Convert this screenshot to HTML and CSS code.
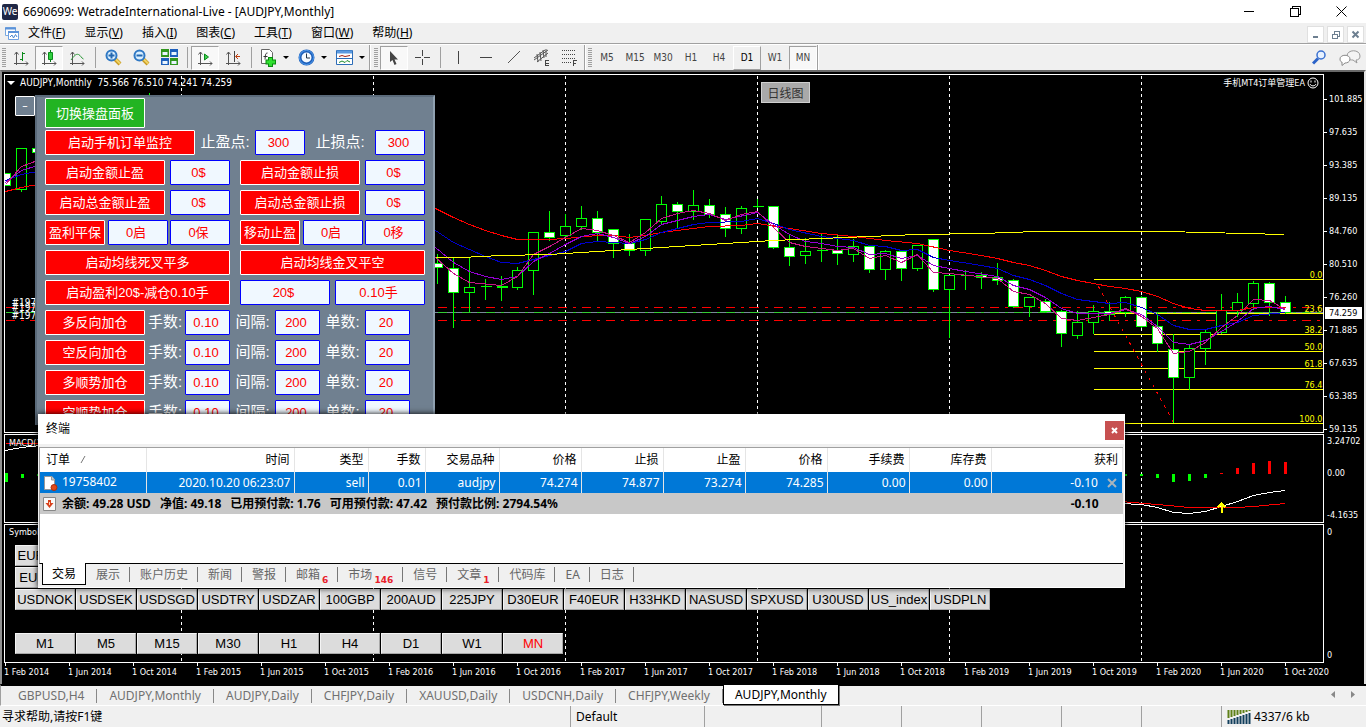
FILE: index.html
```html
<!DOCTYPE html>
<html lang="zh-CN">
<head>
<meta charset="utf-8">
<title>6690699: WetradeInternational-Live - [AUDJPY,Monthly]</title>
<link rel="stylesheet" href="styles.css">
</head>
<body>
<div class="app">
<header class="titlebar">
  <span class="logo">We</span>
  <h1 class="title">6690699: WetradeInternational-Live - [AUDJPY,Monthly]</h1>
  <div class="winbtns">
    <button aria-label="最小化"><svg width="11" height="11"><path d="M0 5.5H10" class="k"/></svg></button>
    <button aria-label="还原"><svg width="11" height="11"><path d="M.5 2.5H8.5V10.500H.5ZM2.500 2.500V.5H10.500V8.500H8.500" class="k"/></svg></button>
    <button aria-label="关闭"><svg width="11" height="11"><path d="M.5 .5L10.500 10.500M10.500 .5L.5 10.500" class="k smooth"/></svg></button>
  </div>
</header>
<nav class="menubar">
  <svg width="16" height="15" class="mdi"><path d="M1.500 1.500H11.500V9.500H1.500Z" fill="#fff" stroke="#78a8e0"/><path d="M1 2.500H12" stroke="#5b92d8" stroke-width="2"/><path d="M4.500 5.500H14.500V13.500H4.500Z" fill="#fff" stroke="#6fa0e0"/><path d="M4 6H15" stroke="#5b92d8" stroke-width="2"/><path d="M6 11L8 9L9.500 12L11.500 8.500L13 11" fill="none" stroke="#4a86d0"/></svg>
  <button>文件(<u>F</u>)</button><button>显示(<u>V</u>)</button><button>插入(<u>I</u>)</button><button>图表(<u>C</u>)</button><button>工具(<u>T</u>)</button><button>窗口(<u>W</u>)</button><button>帮助(<u>H</u>)</button>
  <div class="mdibtns">
    <button aria-label="最小化图表"><svg width="9" height="9"><path d="M2 7H7" class="m"/></svg></button>
    <button aria-label="还原图表"><svg width="9" height="9"><path d="M1 4.500H6V8.500H1ZM3.500 4V1.500H8V6H6" class="m thin"/><path d="M1 4H6M3 1H8" class="m thin"/></svg></button>
    <button aria-label="关闭图表"><svg width="9" height="9"><path d="M1.500 1.500L7.500 7.500M7.500 1.500L1.500 7.500" class="m smooth"/></svg></button>
  </div>
</nav>
<div class="toolbar">
  <i class="grip"></i>
  <button class="tb" aria-label="柱状图"><svg width="16" height="16"><path d="M3.500 2V15M1 13.500H15M1.500 4.500L3.500 2L5.500 4.500M13 11.500L15 13.500L13 15.500" class="ax"/><path d="M9.500 2V11M9.500 3.500H12M7 9.500H9.500" stroke="#0a8a1a" fill="none" stroke-width="1"/></svg></button>
  <button class="tb on" aria-label="蜡烛图"><svg width="16" height="16"><path d="M3.500 2V15M1 13.500H15M1.500 4.500L3.500 2L5.500 4.500M13 11.500L15 13.500L13 15.500" class="ax"/><path d="M9.500 0V12" stroke="#0a7a1a"/><path d="M7.500 2.500H11.500V9.500H7.500Z" fill="#30d040" stroke="#0a8a1a"/></svg></button>
  <button class="tb" aria-label="折线图"><svg width="16" height="16"><path d="M3.500 2V15M1 13.500H15M1.500 4.500L3.500 2L5.500 4.500M13 11.500L15 13.500L13 15.500" class="ax"/><path d="M2 10C5 6 7 3.500 9.500 4.500S12 8 14.500 9" stroke="#2f9a3a" fill="none"/></svg></button>
  <i class="sep"></i>
  <button class="tb" aria-label="放大"><svg width="17" height="17"><path d="M10 10L15 15" stroke="#c89a20" stroke-width="4"/><path d="M10 9.500L15 14.500" stroke="#f0d468" stroke-width="2"/><circle cx="6.500" cy="6.500" r="5" fill="#d9efff" stroke="#2f78c4" stroke-width="2"/><path d="M3.500 6.500H9.500M6.500 3.500V9.500" stroke="#2468b0" stroke-width="2"/></svg></button>
  <button class="tb" aria-label="缩小"><svg width="17" height="17"><path d="M10 10L15 15" stroke="#c89a20" stroke-width="4"/><path d="M10 9.500L15 14.500" stroke="#f0d468" stroke-width="2"/><circle cx="6.500" cy="6.500" r="5" fill="#d9efff" stroke="#2f78c4" stroke-width="2"/><path d="M3.500 6.500H9.500" stroke="#2468b0" stroke-width="2"/></svg></button>
  <button class="tb" aria-label="平铺窗口"><svg width="17" height="17"><path d="M0 0H8V8H0ZM9 9H17V16H9Z" fill="#30961e"/><path d="M9 0H17V8H9ZM0 9H8V16H0Z" fill="#1d5fbc"/><path d="M1.500 3H6.500V6H1.500ZM10.500 3H15.500V6H10.500ZM1.500 12H6.500V15H1.500ZM10.500 12H15.500V15H10.500Z" fill="#e8f4ff"/></svg></button>
  <i class="sep"></i>
  <button class="tb on" aria-label="自动滚动"><svg width="16" height="16"><path d="M3.500 2V15M1 13.500H15M1.500 4.500L3.500 2L5.500 4.500M13 11.500L15 13.500L13 15.500" class="ax"/><path d="M7.500 4V10L11.500 7Z" fill="#40d050" stroke="#0a8a1a"/></svg></button>
  <button class="tb" aria-label="图表平移"><svg width="16" height="16"><path d="M3.500 2V15M1 13.500H15M1.500 4.500L3.500 2L5.500 4.500M13 11.500L15 13.500L13 15.500" class="ax"/><path d="M9.500 1V12" stroke="#444"/><path d="M15 6.500H11M13 4L10.500 6.500L13 9" stroke="#c04010" fill="none"/></svg></button>
  <i class="sep"></i>
  <button class="tb drop" aria-label="指标"><svg width="18" height="18"><path d="M2.500 .5H10.500L13.500 3.500V14.500H2.500Z" fill="#fff" stroke="#666"/><path d="M8.500 4C6 4 6.500 7 6 10.500M4.500 7.500H8.500" stroke="#333" fill="none"/><path d="M11.500 8V18M6.500 13H17" stroke="#0b8a10" stroke-width="5"/><path d="M11.500 9V17M7.500 13H16" stroke="#2fe02f" stroke-width="3"/></svg><b></b></button>
  <button class="tb drop" aria-label="周期"><svg width="17" height="17"><circle cx="8.500" cy="8.500" r="6.500" fill="#f3f9ff" stroke="#1a5cb8" stroke-width="3"/><circle cx="8.500" cy="8.500" r="7" fill="none" stroke="#55a0f0"/><path d="M8.500 4.500V9H12" stroke="#234" fill="none"/></svg><b></b></button>
  <button class="tb drop" aria-label="模板"><svg width="17" height="15"><path d="M.5 .5H16.500V14.500H.5Z" fill="#fff" stroke="#2d6db8"/><path d="M1 2H16" stroke="#5b9ae0" stroke-width="3"/><path d="M1 8.500H16" stroke="#2d6db8"/><path d="M3 6.500L6 5.500L9 6.500L14 5.500" stroke="#a02010" fill="none"/><path d="M3 12.500L6 11L9 12.500L11 10.500L14 12" stroke="#1a8a2a" fill="none"/></svg><b></b></button>
  <i class="end"></i><i class="grip wide-grip"></i>
  <button class="tb on" aria-label="光标"><svg width="10" height="16"><path d="M1 1V12L3.500 10L5.500 15L7.500 14L5.500 9.500H9Z" fill="#444"/></svg></button>
  <button class="tb" aria-label="十字线"><svg width="15" height="15"><path d="M7.500 0V6M7.500 9V15M0 7.500H6M9 7.500H15" class="g"/></svg></button>
  <i class="sep"></i>
  <button class="tb" aria-label="垂直线"><svg width="15" height="15"><path d="M7.500 1V14" class="g"/></svg></button>
  <button class="tb" aria-label="水平线"><svg width="15" height="15"><path d="M1 7.500H13" class="g"/></svg></button>
  <button class="tb" aria-label="趋势线"><svg width="15" height="15"><path d="M1 13L13 1" class="g smooth"/></svg></button>
  <button class="tb" aria-label="等距通道"><svg width="16" height="17"><path d="M0 9L11 1M3 13L14 4M3 5L4 13M6 3L7 12M9 1L10 9M12 0L12 8M0 11L14 1" class="g smooth"/><path d="M15 11.500H11.500V16.500H15M11.500 14H14.500" class="g"/></svg></button>
  <button class="tb" aria-label="斐波那契"><svg width="16" height="17"><path d="M0 1.500H14M0 5.500H14M0 9.500H14M0 13.500H9" class="g dots"/><path d="M15 11.500H11.500V17M11.500 14H14" class="g"/></svg></button>
  <i class="end"></i><i class="grip"></i>
  <button class="tb">M5</button><button class="tb">M15</button><button class="tb">M30</button><button class="tb">H1</button><button class="tb">H4</button><button class="tb raised">D1</button><button class="tb">W1</button><button class="tb on">MN</button>
  <i class="end"></i>
  <div class="tools">
    <button aria-label="搜索"><svg width="15" height="15"><path d="M1 13.500L6 8.500" stroke="#2a62c8" stroke-width="3"/><circle cx="9" cy="5" r="4" fill="#e8f2ff" stroke="#3a70d0" stroke-width="1.500"/></svg></button>
    <button aria-label="消息"><svg width="22" height="16"><path d="M8 6C8 -1 21 -1 21 6C21 9 19 10 17 10L18 13L14 10C10 10 8 9 8 6Z" fill="#f4f4f4" stroke="#999"/><path d="M1 9C1 4 11 4 11 9C11 12 8 13 6 13L3 15.500V12C2 12 1 11 1 9Z" fill="#fff" stroke="#888"/></svg></button>
  </div>
</div>

<main class="workspace">
  <section class="pane main">
    <div class="plot">
      <svg class="canvas" aria-label="AUDJPY 月线图">
        <g transform="translate(-4.500 -74.500)">
          <path class="grid" d="M181 75V440M373 75V440M565 75V440M757 75V440M949 75V440M1141 75V440"/>
          <path class="order" d="M5 307H1322M5 320H1322"/>
          <path d="M5 312H1322" stroke="#778899"/>
          <path d="M5 312H1322" stroke="#32cd32" class="dd"/>
          <path class="fib" d="M1093 279H1322M1093 313H1322M1093 334H1322M1093 351H1322M1093 368H1322M1093 389H1322M1093 423H1322"/>
          <path d="M1098 286L1173 422" stroke="#f00" stroke-dasharray="3 5"/>
          <path class="wick" d="M21 147V191M149 92V100M437 253V283M453 256V327M469 257V311M485 278V299M501 275V300M517 266V289M533 231V294M549 210V240M565 213V236M581 205V229M597 210V240M613 229V257M629 233V255M645 218V255M661 195V224M677 201V227M693 189V219M709 198V217M725 206V236M741 205V233M757 198V207M773 205V248M789 233V265M805 237V263M821 233V261M837 233V264M853 238V261M869 244V272M885 249V279M901 249V280M917 244V270M933 238V291M949 274V337M965 269V289M981 271V288M997 262V284M1013 278V307M1029 297V316M1045 298V312M1061 309V346M1077 310V338M1093 304V333M1109 301V320M1125 295V316M1141 295V327M1157 311V351M1173 333V422M1189 344V389M1205 329V364M1221 293V333M1237 292V316M1253 280V309M1269 281V315M1285 295V313"/>
          <path class="bull" d="M16 148h10v41h-10zM464 287h10v5h-10zM512 270h10v17h-10zM528 232h10v38h-10zM560 226h10v9h-10zM576 218h10v8h-10zM640 219h10v31h-10zM656 204h10v17h-10zM688 205h10v6h-10zM736 208h10v20h-10zM800 251h10v4h-10zM848 246h10v8h-10zM880 251h10v18h-10zM912 245h10v23h-10zM944 275h10v14h-10zM1024 297h10v9h-10zM1072 322h10v13h-10zM1088 311h10v11h-10zM1120 297h10v15h-10zM1184 348h10v29h-10zM1200 332h10v16h-10zM1216 310h10v22h-10zM1232 302h10v8h-10zM1248 283h10v20h-10z"/>
          <path class="bear" d="M0 173h10v12h-10zM32 148h10v4h-10zM432 263h10v4h-10zM448 268h10v24h-10zM544 232h10v5h-10zM592 218h10v14h-10zM608 229h10v14h-10zM624 243h10v7h-10zM672 204h10v7h-10zM704 205h10v9h-10zM720 214h10v14h-10zM768 206h10v41h-10zM784 247h10v9h-10zM832 250h10v3h-10zM864 246h10v23h-10zM896 251h10v17h-10zM928 239h10v50h-10zM976 275h10v2h-10zM992 277h10v3h-10zM1008 280h10v26h-10zM1040 301h10v10h-10zM1056 311h10v22h-10zM1104 311h10v3h-10zM1136 297h10v29h-10zM1152 326h10v17h-10zM1168 349h10v28h-10zM1264 283h10v19h-10zM1280 302h10v10h-10z"/>
          <path class="wick" d="M480 286h11M496 286h11M496 287h11M752 206h11M816 250h11M960 275h11"/>
          <polyline stroke="#f00" points="5,191 21,187 37,184"/>
          <polyline stroke="#00c" points="5,180 21,174 37,171"/>
          <polyline stroke="#9400d3" points="5,182 21,170 37,165"/>
          <polyline stroke="#c71585" points="5,184 21,166 37,160"/>
          <polyline stroke="#f00" points="435,208 453,217 469,224 485,230 501,235 517,239 549,239 565,238 597,235 613,235 629,237 645,235 661,232 693,228 709,226 741,225 757,223 789,228 821,233 853,236 885,240 917,243 949,250 981,255 997,258 1013,262 1029,265 1045,270 1061,276 1077,280 1109,286 1125,288 1141,291 1157,296 1173,303 1189,308 1205,310 1237,310 1253,307 1285,307"/>
          <polyline stroke="#00c" points="435,230 453,242 485,256 501,262 517,263 533,259 565,251 581,243 597,241 629,243 645,239 661,232 693,224 709,222 741,221 757,218 773,223 789,229 821,236 853,240 869,245 885,246 901,250 917,249 933,257 949,260 981,265 997,268 1013,275 1029,279 1045,285 1061,293 1077,299 1109,303 1125,302 1141,307 1157,314 1173,325 1189,329 1205,329 1221,325 1237,322 1253,315 1285,312"/>
          <polyline stroke="#9400d3" points="435,247 453,262 469,271 485,276 501,279 517,276 533,261 549,253 565,244 581,236 597,233 613,237 629,243 645,236 661,224 693,216 709,214 725,219 757,212 773,224 789,234 805,241 821,243 837,246 853,247 869,254 885,253 901,258 917,255 933,265 965,271 997,276 1013,285 1029,289 1045,297 1061,308 1077,313 1109,313 1125,309 1141,314 1157,326 1173,342 1189,344 1205,340 1221,331 1237,321 1253,308 1269,306 1285,309"/>
          <polyline stroke="#c71585" points="435,257 453,273 469,282 501,285 517,276 533,254 549,246 565,237 581,228 597,230 613,235 629,242 645,232 661,218 677,213 693,210 709,213 725,220 741,214 757,211 773,227 789,242 805,246 837,250 853,248 869,258 885,255 901,262 917,254 933,272 949,273 997,278 1013,291 1029,294 1045,303 1061,318 1077,320 1109,314 1125,308 1141,316 1157,328 1173,353 1189,351 1205,342 1221,327 1237,315 1253,299 1269,300 1285,309"/>
          <polyline stroke="#ff0" points="435,257 461,257 501,255 549,254 597,251 645,248 709,244 725,243 773,240 821,238 869,236 917,234 981,233 1037,231 1165,231 1284,234"/>
          <g class="fibtext"><text x="1322" y="277">0.0</text><text x="1322" y="311">23.6</text><text x="1322" y="332">38.2</text><text x="1322" y="349">50.0</text><text x="1322" y="366">61.8</text><text x="1322" y="387">76.4</text><text x="1322" y="421">100.0</text></g>
          <g class="ordertext"><text x="11" y="305">#19758402</text><text x="11" y="310">#19758402</text><text x="11" y="318">#19758402</text></g>
        </g>
      </svg>
      <div class="quote"><span class="tri"></span><span>AUDJPY,Monthly&nbsp; 75.566 76.510 74.241 74.259</span><span class="ea">手机MT4订单管理EA<svg width="12" height="12"><circle cx="6" cy="6" r="5" fill="none" stroke="#fff"/><path d="M4 3.500V5.500M8 3.500V5.500M3 7C4 9.500 8 9.500 9 7" fill="none" stroke="#fff"/></svg></span></div>
    </div>
    <div class="axis price"><span>101.885</span><span>97.635</span><span>93.385</span><span>89.135</span><span>84.760</span><span>80.510</span><span>76.260</span><span>71.885</span><span>67.635</span><span>63.385</span><span>59.135</span><mark>74.259</mark></div>
  </section>
  <section class="pane macd">
    <div class="plot">
      <svg class="canvas" aria-label="MACD">
        <g transform="translate(-4.500 -434.500)">
          <path class="grid" d="M1141 435V530"/>
          <path d="M6 472V481M22 473V477M38 473V475M1125 473V475M1141 473V475M1157 473V477M1173 473V481M1189 473V480M1205 473V477" stroke="#0f0" stroke-width="3"/>
          <path d="M1221 472V473M1237 467V473M1253 462V473M1269 460V473M1285 461V473" stroke="#f00" stroke-width="3"/>
          <polyline stroke="#f00" points="5,443 40,443"/><polyline stroke="#fff" points="5,450 21,447 40,445"/>
          <polyline stroke="#fff" points="1120,503 1141,504 1157,507 1173,512 1189,513 1205,511 1221,506 1237,501 1253,495 1269,492 1285,490"/>
          <polyline stroke="#f00" points="1120,501 1157,504 1189,507 1237,507 1253,506 1285,503"/>
          <path d="M1221 512V504M1217 507L1221 503L1225 507" fill="none" stroke="#ff0" stroke-width="2"/>
        </g>
      </svg>
      <span class="name">MACD(12,26,9)</span>
    </div>
    <div class="axis spread"><span>3.24702</span><span>0.00</span><span>-4.1635</span></div>
  </section>
  <section class="pane symbols">
    <div class="plot">
      <svg class="canvas" aria-hidden="true"><g transform="translate(-4.500 -524.500)"><path class="grid" d="M181 525V662M373 525V662M565 525V662M757 525V662M949 525V662M1141 525V662"/></g></svg>
      <span class="name">Symbols</span>
      <div class="symgrid">
        <div><button>EURUSD</button></div>
        <div><button>EURJPY</button></div>
        <div><button>USDNOK</button><button>USDSEK</button><button>USDSGD</button><button>USDTRY</button><button>USDZAR</button><button>100GBP</button><button>200AUD</button><button>225JPY</button><button>D30EUR</button><button>F40EUR</button><button>H33HKD</button><button>NASUSD</button><button>SPXUSD</button><button>U30USD</button><button>US_index</button><button>USDPLN</button></div>
        <div class="periods"><button>M1</button><button>M5</button><button>M15</button><button>M30</button><button>H1</button><button>H4</button><button>D1</button><button>W1</button><button class="cur">MN</button></div>
      </div>
    </div>
    <div class="axis spread"><span>0</span><span>0</span></div>
  </section>
  <div class="timeaxis"><span>1 Feb 2014</span><span>1 Jun 2014</span><span>1 Oct 2014</span><span>1 Feb 2015</span><span>1 Jun 2015</span><span>1 Oct 2015</span><span>1 Feb 2016</span><span>1 Jun 2016</span><span>1 Oct 2016</span><span>1 Feb 2017</span><span>1 Jun 2017</span><span>1 Oct 2017</span><span>1 Feb 2018</span><span>1 Jun 2018</span><span>1 Oct 2018</span><span>1 Feb 2019</span><span>1 Jun 2019</span><span>1 Oct 2019</span><span>1 Feb 2020</span><span>1 Jun 2020</span><span>1 Oct 2020</span></div>

  <button class="daily">日线图</button>
  <button class="collapse" aria-label="收起">–</button>
  <section class="ea-panel">
    <div class="row tall"><button class="go w100">切换操盘面板</button></div>
    <div class="row"><button class="w150">启动手机订单监控</button><label class="w60" for="tp">止盈点:</label><input class="w50" id="tp" value="300"><label class="w70" for="sl">止损点:</label><input class="w50" id="sl" value="300"></div>
    <div class="row split"><div><button class="w120">启动金额止盈</button><input class="w60" aria-label="金额止盈" value="0$"></div><div><button class="w120">启动金额止损</button><input class="w60" aria-label="金额止损" value="0$"></div></div>
    <div class="row split"><div><button class="w120">启动总金额止盈</button><input class="w60" aria-label="总金额止盈" value="0$"></div><div><button class="w120">启动总金额止损</button><input class="w60" aria-label="总金额止损" value="0$"></div></div>
    <div class="row split"><div><button class="w60">盈利平保</button><input class="w60" aria-label="平保启动" value="0启"><input class="w60" aria-label="平保" value="0保"></div><div><button class="w60">移动止盈</button><input class="w60" aria-label="移动启动" value="0启"><input class="w60" aria-label="移动" value="0移"></div></div>
    <div class="row split"><div><button class="wide">启动均线死叉平多</button></div><div><button class="wide">启动均线金叉平空</button></div></div>
    <div class="row split"><div><button class="wide">启动盈利20$-减仓0.10手</button></div><div><input class="w90" aria-label="盈利金额" value="20$"><input class="w90" aria-label="减仓手数" value="0.10手"></div></div>
    <div class="row"><button class="w100">多反向加仓</button><label class="w40" for="a1">手数:</label><input class="w45" id="a1" value="0.10"><label class="w45" for="a2">间隔:</label><input class="w45" id="a2" value="200"><label class="w45" for="a3">单数:</label><input class="w45" id="a3" value="20"></div>
    <div class="row"><button class="w100">空反向加仓</button><label class="w40" for="b1">手数:</label><input class="w45" id="b1" value="0.10"><label class="w45" for="b2">间隔:</label><input class="w45" id="b2" value="200"><label class="w45" for="b3">单数:</label><input class="w45" id="b3" value="20"></div>
    <div class="row"><button class="w100">多顺势加仓</button><label class="w40" for="c1">手数:</label><input class="w45" id="c1" value="0.10"><label class="w45" for="c2">间隔:</label><input class="w45" id="c2" value="200"><label class="w45" for="c3">单数:</label><input class="w45" id="c3" value="20"></div>
    <div class="row"><button class="w100">空顺势加仓</button><label class="w40" for="d1">手数:</label><input class="w45" id="d1" value="0.10"><label class="w45" for="d2">间隔:</label><input class="w45" id="d2" value="200"><label class="w45" for="d3">单数:</label><input class="w45" id="d3" value="20"></div>
  </section>

  <section class="terminal">
    <header class="thead"><h2>终端</h2><button aria-label="关闭终端"><svg width="7" height="7"><path d="M1 1L6 6M6 1L1 6" stroke="#fff" stroke-width="2"/></svg></button></header>
    <div class="tbody">
    <table>
      <colgroup><col class="c106"><col class="c148"><col class="c74"><col class="c57"><col class="c74"><col class="c82"><col class="c82"><col class="c82"><col class="c82"><col class="c82"><col class="c82"><col></colgroup>
      <thead><tr><th>订单 <svg width="6" height="9" class="sort"><path d="M1 8L5 1" stroke="#777"/></svg></th><th>时间</th><th>类型</th><th>手数</th><th>交易品种</th><th>价格</th><th>止损</th><th>止盈</th><th>价格</th><th>手续费</th><th>库存费</th><th>获利</th></tr></thead>
      <tbody>
        <tr class="sel"><td><svg width="15" height="15" class="doc"><path d="M1.500 .5H9L11.500 3.500V13.500H1.500Z" fill="#fff" stroke="#999"/><path d="M8.500 .5V4H12" fill="#ccc" stroke="#999"/><circle cx="11" cy="11.500" r="3" fill="#e04a18" stroke="#a83010"/></svg>19758402</td><td>2020.10.20 06:23:07</td><td>sell</td><td>0.01</td><td>audjpy</td><td>74.274</td><td>74.877</td><td>73.274</td><td>74.285</td><td>0.00</td><td>0.00</td><td>-0.10<button aria-label="平仓"><svg width="10" height="10"><path d="M1 1L9 9M9 1L1 9" stroke="#a8b4bc" stroke-width="2"/></svg></button></td></tr>
        <tr class="sum"><td colspan="11"><div class="totals"><svg width="13" height="14"><path d="M.5 .5H12.500V13.500H.5Z" fill="#f8f8f8" stroke="#888"/><path d="M5 3H8V6H10.500L6.500 11L2.500 6H5Z" fill="#d8401c"/><path d="M6.500 5V8" stroke="#ffd0b0"/></svg><span>余额: 49.28 USD</span><span>净值: 49.18</span><span>已用预付款: 1.76</span><span>可用预付款: 47.42</span><span>预付款比例: 2794.54%</span></div></td><td>-0.10</td></tr>
      </tbody>
    </table>
    </div>
    <nav class="ttabs"><button class="act">交易</button><button>展示</button><button>账户历史</button><button>新闻</button><button>警报</button><button>邮箱<sub>6</sub></button><button>市场<sub>146</sub></button><button>信号</button><button>文章<sub>1</sub></button><button>代码库</button><button>EA</button><button>日志</button></nav>
  </section>
</main>

<nav class="charttabs">
  <button>GBPUSD,H4</button><button>AUDJPY,Monthly</button><button>AUDJPY,Daily</button><button>CHFJPY,Daily</button><button>XAUUSD,Daily</button><button>USDCNH,Daily</button><button>CHFJPY,Weekly</button><button class="act">AUDJPY,Monthly</button>
  <div class="scroll"><button aria-label="向左"><svg width="4" height="7"><path d="M4 0V7L0 3.500Z" fill="#888"/></svg></button><button aria-label="向右"><svg width="4" height="7"><path d="M0 0V7L4 3.500Z" fill="#888"/></svg></button></div>
</nav>
<footer class="status">
  <span class="help">寻求帮助,请按F1键</span><span class="s134">Default</span><span class="s117"></span><span class="s80"></span><span class="s80"></span><span class="s80"></span><span class="s80"></span><span class="s80"></span>
  <span class="net"><svg width="24" height="14"><path d="M1.500 0V8M4.500 0V7M7.500 0V6M10.500 0V5M13.500 0V4M16.500 0V3M19.500 0V2M22.500 0V1" stroke="#5f8018" stroke-width="2"/><path d="M1.500 10V14M4.500 9V14M7.500 8V14M10.500 7V14M13.500 6V14M16.500 5V14M19.500 4V14M22.500 3V14" stroke="#123f5c" stroke-width="2"/></svg>4337/6 kb</span>
</footer>
</div>
</body>
</html>
```

FILE: styles.css
```css
* { box-sizing: border-box; }
body { margin: 0; font: 12px/16px "Noto Sans", "Noto Sans CJK SC", sans-serif; color: #000; background: #f0f0f0; }
button { font: inherit; color: inherit; background: none; border: 0; padding: 0; margin: 0; white-space: nowrap; }
h1, h2 { font-size: inherit; font-weight: 400; margin: 0; }
svg { display: block; flex: none; }
.app { display: flex; flex-direction: column; height: 100vh; overflow: hidden; }

.titlebar { display: flex; align-items: center; height: 23px; background: #fff; padding-left: 2px; flex: none; }
.logo { width: 16px; height: 16px; border-radius: 2px; background: #1f2745; color: #fff; font-size: 10px; line-height: 15px; text-align: center; margin-right: 5px; }
.winbtns { display: flex; margin-left: auto; }
.winbtns button { width: 46px; height: 21px; display: grid; place-items: center; }
.winbtns button:last-child { margin-right: 2px; }
.k { fill: none; stroke: #000; shape-rendering: crispEdges; }
.k.smooth { shape-rendering: auto; }

.menubar { display: flex; align-items: center; height: 20px; padding-left: 4px; gap: 19px; flex: none; }
.mdi { margin-right: -11px; }
.mdibtns { display: flex; gap: 3px; margin: 2px 2px 0 auto; }
.mdibtns button { width: 17px; height: 17px; background: #fff; border: 1px solid #e0e0e0; display: grid; place-items: center; }
.m { fill: none; stroke: #6d7f90; stroke-width: 2; shape-rendering: crispEdges; }
.m.thin { stroke-width: 1; }
.m.smooth { shape-rendering: auto; }

.toolbar { display: flex; height: 27px; border-top: 1px solid #a0a0a0; box-shadow: inset 0 1px #fff; align-items: center; flex: none; padding-top: 1px; font: 10px/12px "DejaVu Sans Condensed", "DejaVu Sans", sans-serif; color: #444; }
.grip { width: 4px; height: 20px; margin: 0 1px 0 2px; background: repeating-linear-gradient(#a0a0a0 0 1px, #f0f0f0 1px 2px); flex: none; }
.wide-grip { margin: 0 2px 0 3px; }
.tb { width: 28px; height: 24px; display: flex; align-items: center; justify-content: center; border: 1px solid transparent; flex: none; }
.tb.on { background: #f8f8f8; border-color: #a0a0a0 #fff #fff #a0a0a0; }
.tb.raised { border-color: #fff #a0a0a0 #a0a0a0 #fff; color: #000; }
.tb.drop { width: 38px; gap: 6px; }
.tb.drop b { border: 3px solid transparent; border-top-color: #000; border-bottom: 0; }
.sep { width: 8px; height: 21px; background: linear-gradient(#a0a0a0, #a0a0a0) center / 1px 100% no-repeat; flex: none; }
.end { width: 2px; height: 25px; border-left: 1px solid #a0a0a0; background: #fff; flex: none; }
.tools { display: flex; gap: 12px; margin: 0 5px 0 auto; align-items: center; }
.ax { fill: none; stroke: #555; }
.g { fill: none; stroke: #444; shape-rendering: crispEdges; }
.g.smooth { shape-rendering: auto; stroke: #555; }
.dots { stroke-dasharray: 1 1; }

.workspace { position: relative; flex: 1; min-height: 0; overflow: hidden; display: flex; flex-direction: column; gap: 1px; background: #000; border-top: 2px solid #696969; border-left: 2px solid #909090; border-right: 2px solid #e3e3e3; padding: 2px 0 0 2px; color: #fff; font: 9px/12px "DejaVu Sans Condensed", "DejaVu Sans", "Noto Sans CJK SC", sans-serif; }
.pane { display: flex; flex: none; }
.pane.main { flex: 1; min-height: 0; }
.macd { height: 89px; }
.symbols { height: 139px; }
.plot { position: relative; flex: 1; min-width: 0; border: 1px solid #fff; overflow: hidden; }
.canvas { position: absolute; inset: 0; width: 100%; height: 100%; shape-rendering: crispEdges; }
.canvas polyline { fill: none; }
.grid { stroke: #fff; stroke-dasharray: 3 3; }
.order { stroke: #f00; stroke-dasharray: 9 6 3 6; }
.dd { stroke-dasharray: 9 6 3 6; }
.fib { stroke: #ff0; }
.fibtext { fill: #ff0; text-anchor: end; }
.ordertext { fill: #fff; font-size: 10px; }
.wick { stroke: #0f0; }
.bull { stroke: #0f0; fill: #000; }
.bear { stroke: #0f0; fill: #fff; }
.quote { position: relative; display: flex; align-items: center; height: 16px; padding: 0 4px 0 2px; font-size: 10px; }
.tri { border: 4px solid transparent; border-top-color: #fff; border-bottom: 0; margin-right: 5px; }
.ea { display: flex; margin-left: auto; align-items: center; gap: 2px; font-size: 9px; }
.name { position: relative; display: block; padding: 2px 4px; }
.symbols .name { padding-top: 1px; }
.axis { width: 40px; flex: none; display: flex; flex-direction: column; }
.axis span { display: block; padding-left: 3px; }
.price { position: relative; padding-top: 9px; }
.price span { height: 33px; line-height: 33px; padding-left: 5px; flex: none; background: linear-gradient(#fff, #fff) 0 center / 3px 1px no-repeat; }
.price mark { position: absolute; top: 233px; left: 1px; right: 2px; background: #fff; color: #000; line-height: 12px; padding-left: 4px; }
.spread { justify-content: space-between; }
.macd .spread { justify-content: flex-start; padding-top: 1px; }
.macd .spread span + span { margin-top: 20px; }
.macd .spread span:last-child { margin-top: 30px; }
.symbols .spread { padding: 2px 0; }
.timeaxis { display: flex; height: 21px; flex: none; margin-top: -1px; overflow: hidden; }
.timeaxis span { width: 64px; flex: none; white-space: nowrap; line-height: 18px; background: linear-gradient(#fff, #fff) 1px 0 / 1px 3px no-repeat; }

.symgrid { position: relative; padding: 5px 0 0 10px; display: grid; gap: 1px; font: 13px/19px "Liberation Sans", Arial, sans-serif; color: #000; }
.symgrid div { display: flex; gap: 1px; }
.symgrid button { width: 60px; height: 21px; background: #dcdcdc; border: 1px solid #f4f4f4; border-color: #f4f4f4 #a8a8a8 #a8a8a8 #f4f4f4; overflow: hidden; flex: none; }
.symgrid .periods { margin-top: 22px; }
.symgrid .cur { color: #f00; }

.daily { position: absolute; left: 759px; top: 10px; width: 49px; height: 21px; background: #a9a9a9; border: 1px solid #d0d0d0; color: #333; font: 12px/18px "Noto Sans CJK SC", sans-serif; }
.collapse { position: absolute; left: 13px; top: 24px; width: 20px; height: 20px; background: #708090; border: 1px solid #fff; border-radius: 1px; font-size: 12px; }
.ea-panel { position: absolute; left: 33px; top: 23px; width: 400px; height: 330px; overflow: hidden; background: #708090; border: 2px solid #5b6b7b; border-right-color: #8fa0b0; padding: 1px 8px; font: 13px/17px "Liberation Sans", "Noto Sans CJK SC", sans-serif; }
.row { display: flex; height: 25px; margin-bottom: 5px; width: 380px; }
.row.tall { height: 30px; margin-bottom: 2px; }
.row.split { gap: 10px; }
.row.split > div { width: 185px; display: flex; justify-content: space-between; }
.row button { background: #f00; border: 1px solid #fff; border-radius: 1px; color: #fff; flex: none; }
.row button.go { background: #22b422; }
.row input { font: inherit; flex: none; min-width: 0; padding: 0 3px 0 0; background: #f0f8ff; border: 1px solid #00f; border-radius: 1px; color: #f00; text-align: center; }
.row label { font-size: 15px; line-height: 24px; flex: none; text-align: center; white-space: nowrap; }
.w40 { width: 40px; } .w45 { width: 45px; } .w50 { width: 50px; } .w60 { width: 60px; } .w70 { width: 70px; } .w90 { width: 90px; }
.w100 { width: 100px; } .w120 { width: 120px; } .w150 { width: 150px; } .wide { width: 185px; }

.terminal { position: absolute; left: 36px; right: 239px; top: 342px; background: #f0f0f0; color: #000; box-shadow: 0 0 6px #000; font: 12px/16px "Noto Sans", "Noto Sans CJK SC", sans-serif; border-right: 1px solid #fff; border-bottom: 1px solid #fff; }
.thead { height: 30px; display: flex; align-items: center; justify-content: space-between; padding-left: 8px; background: #fff; }
.thead button { width: 19px; height: 19px; background: #c75050; display: grid; place-items: center; margin-top: 2px; }
.tbody { margin: 3px 1px 0 1px; height: 117px; background: #fff; border-top: 1px solid #a0a0a0; border-left: 1px solid #a0a0a0; border-bottom: 1px solid #000; }
table { width: 100%; border-collapse: collapse; table-layout: fixed; }
th, td { font-weight: 400; text-align: right; padding: 0 3px; height: 21px; line-height: 16px; white-space: nowrap; border-right: 1px solid #e5e5e5; }
th { height: 24px; padding-right: 4px; }
th:first-child, td:first-child { text-align: left; }
th:first-child { padding-left: 6px; }
.sort { display: inline-block; margin-left: 7px; }
td:first-child { padding-left: 3px; }
.doc { display: inline-block; width: 15px; margin-right: 4px; vertical-align: middle; }
.sel { background: #0078d7; color: #fff; }
.sum { background: #c8c8c8; }
.sum td { font-weight: 700; border: 0; }
.sum td:last-child { padding-right: 24px; }
.totals { display: flex; align-items: center; gap: 9px; }
.totals svg { margin-right: -3px; }
.sel td button { margin: 0 2px 0 9px; display: inline-block; vertical-align: middle; }
.c57 { width: 57px; } .c74 { width: 74px; } .c82 { width: 82px; } .c106 { width: 106px; } .c148 { width: 148px; }
.ttabs { display: flex; height: 23px; padding-left: 4px; align-items: flex-start; color: #666; }
.ttabs button { height: 21px; padding: 0 10px; display: flex; align-items: center; background: linear-gradient(#777, #777) right center / 1px 15px no-repeat; }
.ttabs .act { height: 22px; padding: 0 9px; margin-top: -1px; background: #fff; border: 1px solid #000; border-top: 0; color: #000; }
.ttabs sub { font: 700 9px/9px "DejaVu Sans", sans-serif; color: #e8202a; align-self: flex-end; margin-left: 2px; }

.charttabs { display: flex; align-items: flex-start; height: 22px; border-top: 2px solid #000; flex: none; padding-left: 5px; color: #707070; border-left: 1px solid #a0a0a0; border-bottom: 1px solid #fff; }
.charttabs > button { height: 20px; padding: 0 13px 0 12px; background: linear-gradient(#888, #888) right center / 1px 14px no-repeat; }
.charttabs > .act { padding: 0 11px; background: #fff; color: #000; border: 1px solid #000; border-top: 0; margin-top: -1px; height: 20px; box-shadow: 1px 1px #777; }
.scroll { display: flex; gap: 16px; margin: 5px 11px 0 auto; }
.status { display: flex; height: 21px; flex: none; line-height: 22px; }
.status span { border-left: 1px solid #a0a0a0; padding-left: 5px; }
.status .help { flex: 1; border: 0; padding-left: 2px; }
.s134 { width: 134px; } .s117 { width: 117px; } .s80 { width: 80px; }
.net { width: 145px; display: flex; align-items: center; gap: 3px; }
```
